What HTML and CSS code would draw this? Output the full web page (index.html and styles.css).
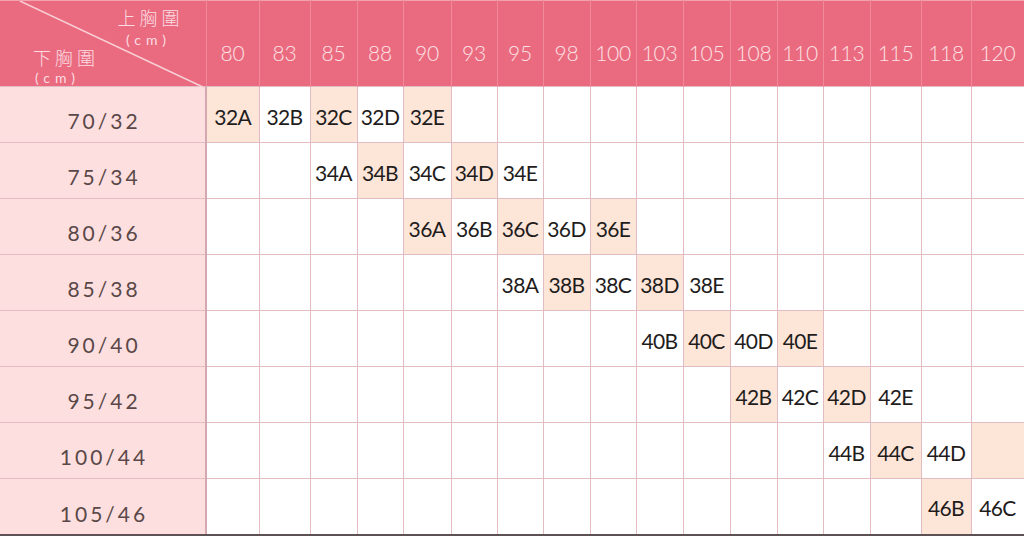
FILE: index.html
```html
<!DOCTYPE html>
<html lang="zh-Hant">
<head>
<meta charset="utf-8">
<title>尺寸對照表</title>
<link rel="stylesheet" href="styles.css">
</head>
<body>
<table class="size-table">
  <colgroup>
    <col class="col-label">
    <col><col><col><col><col><col><col><col><col><col><col><col><col><col><col><col><col>
  </colgroup>
  <thead>
    <tr class="head-row">
      <th class="corner">
        <svg class="diag" width="206" height="88" viewBox="0 0 206 88" aria-hidden="true"><line x1="20" y1="0" x2="205" y2="87" stroke="#f8d0d6" stroke-width="1.4"/></svg>
        <div class="corner-inner">
          <div class="top-label"><span class="zh">上胸圍</span><span class="cm">(cm)</span></div>
          <div class="bottom-label"><span class="zh">下胸圍</span><span class="cm">(cm)</span></div>
        </div>
      </th>
      <th>80</th><th>83</th><th>85</th><th>88</th><th>90</th><th>93</th><th>95</th><th>98</th><th>100</th><th>103</th><th>105</th><th>108</th><th>110</th><th>113</th><th>115</th><th>118</th><th>120</th>
    </tr>
  </thead>
  <tbody>
    <tr>
      <th class="row-label">70/32</th>
      <td class="hl">32A</td><td>32B</td><td class="hl">32C</td><td>32D</td><td class="hl">32E</td><td></td><td></td><td></td><td></td><td></td><td></td><td></td><td></td><td></td><td></td><td></td><td></td>
    </tr>
    <tr>
      <th class="row-label">75/34</th>
      <td></td><td></td><td>34A</td><td class="hl">34B</td><td>34C</td><td class="hl">34D</td><td>34E</td><td></td><td></td><td></td><td></td><td></td><td></td><td></td><td></td><td></td><td></td>
    </tr>
    <tr>
      <th class="row-label">80/36</th>
      <td></td><td></td><td></td><td></td><td class="hl">36A</td><td>36B</td><td class="hl">36C</td><td>36D</td><td class="hl">36E</td><td></td><td></td><td></td><td></td><td></td><td></td><td></td><td></td>
    </tr>
    <tr>
      <th class="row-label">85/38</th>
      <td></td><td></td><td></td><td></td><td></td><td></td><td>38A</td><td class="hl">38B</td><td>38C</td><td class="hl">38D</td><td>38E</td><td></td><td></td><td></td><td></td><td></td><td></td>
    </tr>
    <tr>
      <th class="row-label">90/40</th>
      <td></td><td></td><td></td><td></td><td></td><td></td><td></td><td></td><td></td><td>40B</td><td class="hl">40C</td><td>40D</td><td class="hl">40E</td><td></td><td></td><td></td><td></td>
    </tr>
    <tr>
      <th class="row-label">95/42</th>
      <td></td><td></td><td></td><td></td><td></td><td></td><td></td><td></td><td></td><td></td><td></td><td class="hl">42B</td><td>42C</td><td class="hl">42D</td><td>42E</td><td></td><td></td>
    </tr>
    <tr>
      <th class="row-label">100/44</th>
      <td></td><td></td><td></td><td></td><td></td><td></td><td></td><td></td><td></td><td></td><td></td><td></td><td></td><td>44B</td><td class="hl">44C</td><td>44D</td><td class="hl"></td>
    </tr>
    <tr class="last-row">
      <th class="row-label">105/46</th>
      <td></td><td></td><td></td><td></td><td></td><td></td><td></td><td></td><td></td><td></td><td></td><td></td><td></td><td></td><td></td><td class="hl">46B</td><td>46C</td>
    </tr>
  </tbody>
</table>
</body>
</html>
```

FILE: styles.css
```css
html, body {
  margin: 0;
  padding: 0;
  background: #ffffff;
  overflow: hidden;
}

.size-table {
  width: 1024px;
  border-collapse: collapse;
  table-layout: fixed;
  font-family: "Lato", "Noto Sans", sans-serif;
}

.size-table col { width: 47px; }
.size-table col:nth-child(1) { width: 206px; }
.size-table col:nth-child(2) { width: 53px; }
.size-table col:nth-child(3) { width: 51px; }
.size-table col:nth-child(6) { width: 48px; }
.size-table col:nth-child(5),
.size-table col:nth-child(7),
.size-table col:nth-child(8),
.size-table col:nth-child(10),
.size-table col:nth-child(14) { width: 46px; }
.size-table col:nth-child(16) { width: 51px; }
.size-table col:nth-child(17) { width: 50px; }
.size-table col:nth-child(18) { width: 53px; }

.head-row {
  height: 85px;
}

.head-row th {
  background: #ea6b7f;
  color: #fde1e5;
  font-weight: 300;
  font-size: 21px;
  padding: 18px 0 0 0;
  text-align: center;
  border-left: 1px solid #f08a9a;
  border-right: 1px solid #f08a9a;
  border-top: 1px solid #f3a3ae;
  letter-spacing: -0.3px;
}

.head-row th.corner {
  position: relative;
  padding: 0;
  vertical-align: top;
  border-left: none;
}

.diag {
  position: absolute;
  left: 0;
  top: 0;
}

.corner-inner {
  height: 85px;
  display: flex;
  flex-direction: column;
  justify-content: space-between;
  font-family: "Noto Sans CJK TC", "Noto Sans", sans-serif;
  color: #fbdde2;
}

.corner-inner .zh {
  display: block;
  font-size: 18px;
  line-height: 20px;
  letter-spacing: 4px;
}

.corner-inner .cm {
  display: block;
  font-family: "Lato", sans-serif;
  font-weight: 400;
  font-size: 14px;
  line-height: 14px;
  letter-spacing: 5px;
}

.top-label {
  align-self: flex-end;
  text-align: center;
  padding: 6px 22px 0 0;
}

.top-label .cm {
  margin-top: 6px;
  padding-right: 4px;
}

.bottom-label {
  align-self: flex-start;
  text-align: left;
  padding: 0 0 3px 33px;
}

.bottom-label .cm {
  margin-top: 4px;
  padding-left: 2px;
}

tbody tr {
  height: 56px;
}

tbody td,
tbody th {
  border: 1px solid #e3bcc3;
  text-align: center;
  vertical-align: middle;
}

tbody td {
  background: #ffffff;
  color: #1f1c1c;
  font-size: 21px;
  font-weight: 400;
  letter-spacing: -0.6px;
  padding: 4px 0 0 0;
  white-space: nowrap;
}

tbody td.hl {
  background: #fde5d8;
}

.row-label {
  background: #fedfdf;
  color: #5a4848;
  font-weight: 400;
  font-size: 21px;
  letter-spacing: 3px;
  padding: 11px 0 0 3px;
  border-left: none;
  border-right: 2px solid #d3a8b0 !important;
}

.last-row {
  height: 56px;
}

.last-row td,
.last-row th {
  border-bottom: 2px solid #5c5254;
  padding-top: 14px;
}

.last-row td {
  padding-top: 2px;
}
```
